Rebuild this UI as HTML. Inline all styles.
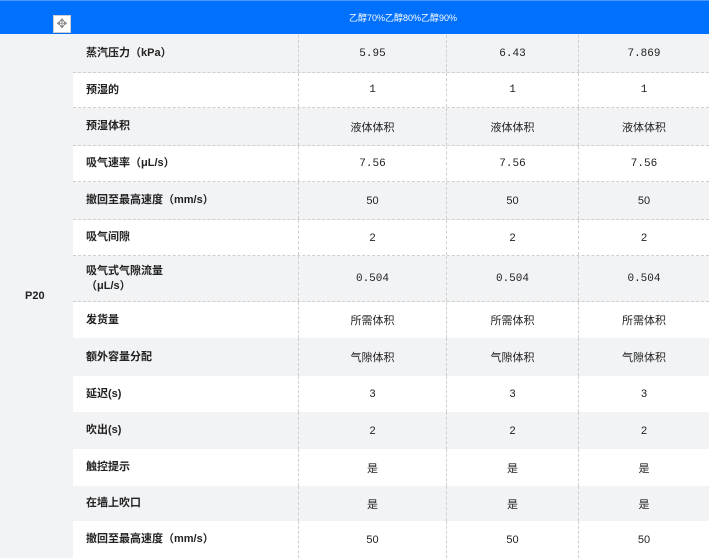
<!DOCTYPE html>
<html><head><meta charset="utf-8"><style>
body{margin:0;width:709px;height:558px;overflow:hidden;background:#f2f3f5;font-family:"Liberation Sans","Noto Sans CJK SC",sans-serif;position:relative}
.hd{position:absolute;left:0;top:0;width:709px;height:34px;background:#0070ff;border-top:1px solid #4a9aff;box-sizing:border-box;color:#fff;font-size:9px;text-align:center;line-height:34px}
.hd span{position:absolute;left:349px}
.mv{position:absolute;left:53px;top:15px;width:18px;height:18px;background:#fff;border:1px solid #ccc;box-sizing:border-box;color:#888;font-size:13px;line-height:16px;text-align:center}
.r{position:absolute;left:73px;width:636px;box-sizing:border-box;border-bottom:1px dashed #cfcfcf}
.r div{position:absolute;top:0;height:100%;display:flex;align-items:center;font-size:11px;color:#222;box-sizing:border-box}
.c0{left:0;width:225px;padding-left:13px;font-weight:bold;line-height:15px}
.c1{left:225px;width:148px;justify-content:center;border-left:1px dashed #cfcfcf}
.c2{left:373px;width:132px;justify-content:center;border-left:1px dashed #cfcfcf}
.c3{left:505px;width:131px;justify-content:center;border-left:1px dashed #cfcfcf}
.g{background:#f2f3f5}.w{background:#fff}
.p20{position:absolute;left:25px;top:290px;font-weight:bold;font-size:11px;color:#222}
.n{font-family:"Liberation Mono",monospace;font-size:10px}
</style></head><body>
<div class="hd"><span>乙醇70%乙醇80%乙醇90%</span></div>
<div class="mv">✥</div>
<div class="p20">P20</div>
<div class="r g" style="top:35px;height:38px"><div class="c0">蒸汽压力（kPa）</div><div class="c1 n">5.95</div><div class="c2 n">6.43</div><div class="c3 n">7.869</div></div>
<div class="r w" style="top:73px;height:35px"><div class="c0">预湿的</div><div class="c1 n">1</div><div class="c2 n">1</div><div class="c3 n">1</div></div>
<div class="r g" style="top:108px;height:38px"><div class="c0">预湿体积</div><div class="c1">液体体积</div><div class="c2">液体体积</div><div class="c3">液体体积</div></div>
<div class="r w" style="top:146px;height:36px"><div class="c0">吸气速率（μL/s）</div><div class="c1 n">7.56</div><div class="c2 n">7.56</div><div class="c3 n">7.56</div></div>
<div class="r g" style="top:182px;height:38px"><div class="c0">撤回至最高速度（mm/s）</div><div class="c1">50</div><div class="c2">50</div><div class="c3">50</div></div>
<div class="r w" style="top:220px;height:36px"><div class="c0">吸气间隙</div><div class="c1">2</div><div class="c2">2</div><div class="c3">2</div></div>
<div class="r g" style="top:256px;height:46px"><div class="c0">吸气式气隙流量<br>（μL/s）</div><div class="c1 n">0.504</div><div class="c2 n">0.504</div><div class="c3 n">0.504</div></div>
<div class="r w" style="top:302px;height:36px;border-bottom:none"><div class="c0">发货量</div><div class="c1">所需体积</div><div class="c2">所需体积</div><div class="c3">所需体积</div></div>
<div class="r g" style="top:338px;height:38px;border-bottom:none"><div class="c0">额外容量分配</div><div class="c1">气隙体积</div><div class="c2">气隙体积</div><div class="c3">气隙体积</div></div>
<div class="r w" style="top:376px;height:36px;border-bottom:none"><div class="c0">延迟(s)</div><div class="c1">3</div><div class="c2">3</div><div class="c3">3</div></div>
<div class="r g" style="top:412px;height:37px;border-bottom:none"><div class="c0">吹出(s)</div><div class="c1">2</div><div class="c2">2</div><div class="c3">2</div></div>
<div class="r w" style="top:449px;height:37px;border-bottom:none"><div class="c0">触控提示</div><div class="c1">是</div><div class="c2">是</div><div class="c3">是</div></div>
<div class="r g" style="top:486px;height:35px;border-bottom:none"><div class="c0">在墙上吹口</div><div class="c1">是</div><div class="c2">是</div><div class="c3">是</div></div>
<div class="r w" style="top:521px;height:37px;border-bottom:none"><div class="c0">撤回至最高速度（mm/s）</div><div class="c1">50</div><div class="c2">50</div><div class="c3">50</div></div>
</body></html>
